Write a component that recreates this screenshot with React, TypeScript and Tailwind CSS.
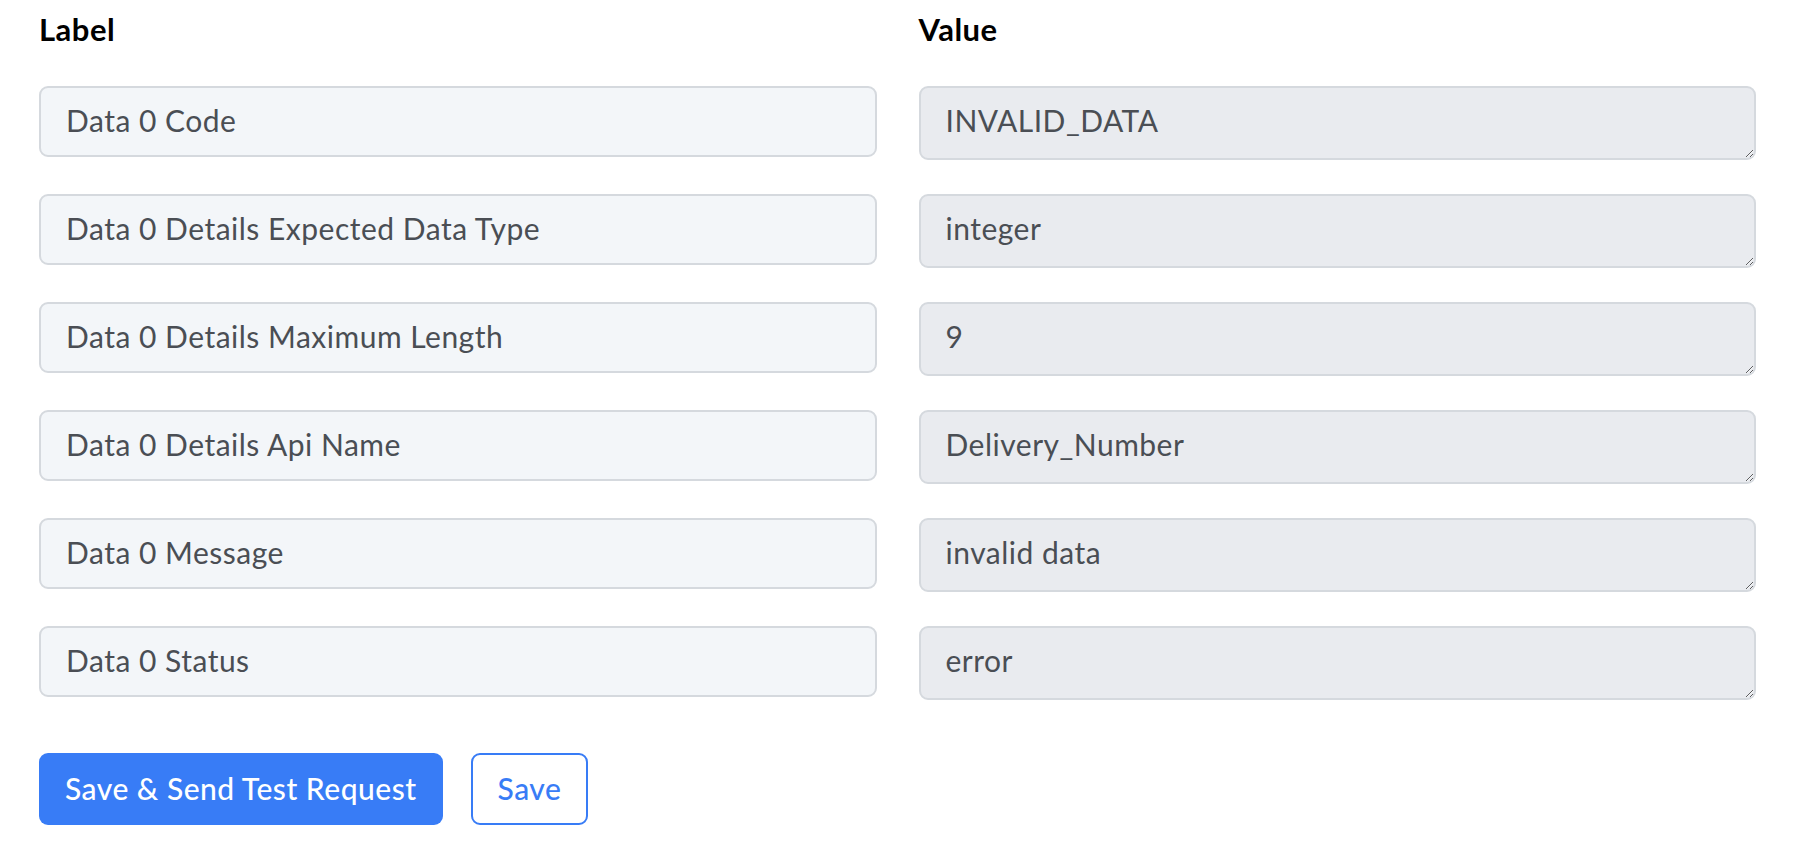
const rows = [
  { label: "Data 0 Code", value: "INVALID_DATA" },
  { label: "Data 0 Details Expected Data Type", value: "integer" },
  { label: "Data 0 Details Maximum Length", value: "9" },
  { label: "Data 0 Details Api Name", value: "Delivery_Number" },
  { label: "Data 0 Message", value: "invalid data" },
  { label: "Data 0 Status", value: "error" },
];

export default function App() {
  return (
    <div className="min-h-screen bg-white pl-[39px] pr-[48px] pt-[11px] font-['Lato',sans-serif] text-[30px] tracking-[0.5px] text-[#4a4e54]">
      <div className="grid grid-cols-2 gap-x-[42px]">
        <div className="h-[75px] text-[31px] font-bold leading-[36px] text-black">Label</div>
        <div className="h-[75px] text-[31px] font-bold leading-[36px] text-black">Value</div>
        {rows.map((row) => (
          <RowFields key={row.label} label={row.label} value={row.value} />
        ))}
      </div>
      <div className="mt-[19px] flex items-center gap-[28px]">
        <button
          type="button"
          className="h-[72px] rounded-[9px] bg-[#387cf6] px-[26px] pb-[2px] text-[30px] font-medium tracking-[0.5px] text-white"
        >
          Save &amp; Send Test Request
        </button>
        <button
          type="button"
          className="h-[72px] rounded-[9px] border-2 border-[#387cf6] bg-white px-[25px] pb-[2px] text-[30px] font-medium tracking-[0.5px] text-[#387cf6]"
        >
          Save
        </button>
      </div>
    </div>
  );
}

function RowFields({ label, value }: { label: string; value: string }) {
  return (
    <>
      <div className="mb-[34px]">
        <input
          readOnly
          value={label}
          className="h-[71px] w-full rounded-[9px] border-2 border-[#d5d9de] bg-[#f3f6f9] px-[25px] pb-[4px] tracking-[0.5px] text-[#4a4e54] outline-none"
        />
      </div>
      <div className="mb-[34px]">
        <textarea
          readOnly
          value={value}
          rows={1}
          className="block h-[74px] w-full resize-y rounded-[9px] border-2 border-[#d5d9de] bg-[#e9ebef] px-[25px] pt-[12px] pb-[16px] leading-[40px] tracking-[0.5px] text-[#4a4e54] outline-none"
        />
      </div>
    </>
  );
}
